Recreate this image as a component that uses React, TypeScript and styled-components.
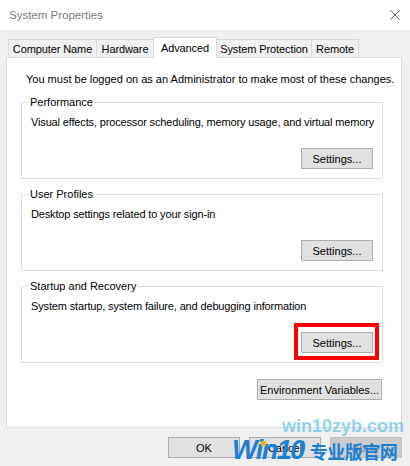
import React from "react";
import styled, { createGlobalStyle } from "styled-components";

const Global = createGlobalStyle`
  html, body { margin: 0; padding: 0; background: #f0f0f0; }
  * { box-sizing: border-box; }
`;

const font = `"Liberation Sans", Arial, sans-serif`;

const Window = styled.div`
  position: relative;
  width: 410px;
  height: 466px;
  overflow: hidden;
  background: #f0f0f0;
  display: flex;
  flex-direction: column;
  font-family: ${font};
  font-size: 11px;
  color: #000;
`;

const TitleBar = styled.div`
  height: 30px;
  flex: none;
  background: #fff;
  display: flex;
  align-items: center;
  justify-content: space-between;
  padding: 0 10px 0 9px;
`;

const Title = styled.span`
  font-size: 11.5px;
  color: #7a7a7a;
`;

const Body = styled.div`
  flex: 1;
  display: flex;
  flex-direction: column;
  padding: 7px 8px 0 6px;
  min-height: 0;
`;

const TabRow = styled.div`
  height: 20px;
  flex: none;
  display: flex;
  align-items: flex-end;
  padding-left: 2px;
`;

const Tab = styled.div<{ $w: number; $active?: boolean }>`
  position: relative;
  width: ${(p) => p.$w}px;
  height: ${(p) => (p.$active ? 21 : 18)}px;
  margin-right: -1px;
  margin-bottom: ${(p) => (p.$active ? -1 : 0)}px;
  z-index: ${(p) => (p.$active ? 2 : 1)};
  display: flex;
  align-items: center;
  justify-content: center;
  padding-bottom: ${(p) => (p.$active ? 1 : 0)}px;
  background: ${(p) => (p.$active ? "#fff" : "#f0f0f0")};
  border: 1px solid #d9d9d9;
  border-bottom: none;
  white-space: nowrap;
  letter-spacing: -0.1px;
`;

const Panel = styled.div`
  flex: 1;
  background: #fff;
  border: 1px solid #d9d9d9;
  padding: 13px 18px 0 14px;
  display: flex;
  flex-direction: column;
`;

const Note = styled.div`
  line-height: 16px;
  padding-left: 5px;
  margin-bottom: 7px;
  white-space: nowrap;
`;

const Groups = styled.div`
  display: flex;
  flex-direction: column;
  gap: 7px;
`;

const Group = styled.fieldset`
  margin: 0;
  padding: 0 9px 9px 9px;
  border: 1px solid #dcdcdc;
  min-width: 0;
`;

const Legend = styled.legend`
  padding: 0 1px;
  margin-left: -2px;
  line-height: 16px;
`;

const Desc = styled.div`
  line-height: 16px;
  margin-top: 4px;
  white-space: nowrap;
  letter-spacing: -0.15px;
`;

const ButtonRow = styled.div<{ $mt: number; $mr?: number }>`
  display: flex;
  justify-content: flex-end;
  gap: 9px;
  margin-top: ${(p) => p.$mt}px;
  margin-right: ${(p) => p.$mr ?? 0}px;
`;

const Button = styled.button<{ $w: number; $disabled?: boolean }>`
  position: relative;
  width: ${(p) => p.$w}px;
  height: 21px;
  padding: 0;
  margin: 0;
  font-family: ${font};
  font-size: 11px;
  color: ${(p) => (p.$disabled ? "#838383" : "#000")};
  background: ${(p) => (p.$disabled ? "#cccccc" : "#e1e1e1")};
  border: 1px solid ${(p) => (p.$disabled ? "#bfbfbf" : "#adadad")};
  border-radius: 0;
`;

const Highlight = styled.span`
  position: absolute;
  top: -10px;
  left: -8px;
  right: -7px;
  bottom: -8px;
  border: 4px solid #ff0000;
  pointer-events: none;
`;

const Footer = styled.div`
  flex: none;
  display: flex;
  justify-content: flex-end;
  gap: 9px;
  padding: 9px 0 8px;
`;

const WatermarkSite = styled.div`
  position: absolute;
  left: 282px;
  top: 416px;
  font-family: ${font};
  font-weight: bold;
  font-size: 18px;
  color: rgba(110, 195, 235, 0.75);
  pointer-events: none;
`;

const WatermarkBrand = styled.div`
  position: absolute;
  left: 232px;
  top: 435px;
  display: flex;
  align-items: baseline;
  gap: 6px;
  color: #1b7fd4;
  pointer-events: none;
`;

const BrandLatin = styled.span`
  font-family: ${font};
  font-weight: bold;
  font-style: italic;
  font-size: 27px;
  letter-spacing: -1.5px;
`;

const BrandCjk = styled.span`
  font-family: "Noto Sans CJK SC", sans-serif;
  font-weight: bold;
  font-size: 18px;
  letter-spacing: -0.5px;
`;

const Dot = styled.span`
  position: absolute;
  left: 261px;
  top: 441px;
  width: 5px;
  height: 5px;
  background: #f6b400;
`;

const CloseIcon = () => (
  <svg width="10" height="10" viewBox="0 0 10 10">
    <path d="M0.5 0.5 L9.5 9.5 M9.5 0.5 L0.5 9.5" stroke="#5a5a5a" strokeWidth="1" fill="none" />
  </svg>
);

const groups = [
  {
    title: "Performance",
    desc: "Visual effects, processor scheduling, memory usage, and virtual memory",
  },
  { title: "User Profiles", desc: "Desktop settings related to your sign-in" },
  {
    title: "Startup and Recovery",
    desc: "System startup, system failure, and debugging information",
    marked: true,
  },
];

const tabs = [
  { label: "Computer Name", w: 89 },
  { label: "Hardware", w: 58 },
  { label: "Advanced", w: 64, active: true },
  { label: "System Protection", w: 96 },
  { label: "Remote", w: 48 },
];

export default function App() {
  return (
    <>
      <Global />
      <Window>
        <TitleBar>
          <Title>System Properties</Title>
          <CloseIcon />
        </TitleBar>
        <Body>
          <TabRow>
            {tabs.map((t) => (
              <Tab key={t.label} $w={t.w} $active={t.active}>
                {t.label}
              </Tab>
            ))}
          </TabRow>
          <Panel>
            <Note>You must be logged on as an Administrator to make most of these changes.</Note>
            <Groups>
              {groups.map((g) => (
                <Group key={g.title}>
                  <Legend>{g.title}</Legend>
                  <Desc>{g.desc}</Desc>
                  <ButtonRow $mt={18}>
                    <Button $w={72}>
                      Settings...
                      {g.marked && <Highlight />}
                    </Button>
                  </ButtonRow>
                </Group>
              ))}
            </Groups>
            <ButtonRow $mt={16} $mr={1}>
              <Button $w={125}>Environment Variables...</Button>
            </ButtonRow>
          </Panel>
          <Footer>
            <Button $w={72}>OK</Button>
            <Button $w={72}>Cancel</Button>
            <Button $w={72} $disabled>
              Apply
            </Button>
          </Footer>
        </Body>
        <WatermarkSite>win10zyb.com</WatermarkSite>
        <WatermarkBrand>
          <BrandLatin>Win10</BrandLatin>
          <BrandCjk>专业版官网</BrandCjk>
        </WatermarkBrand>
        <Dot />
      </Window>
    </>
  );
}
